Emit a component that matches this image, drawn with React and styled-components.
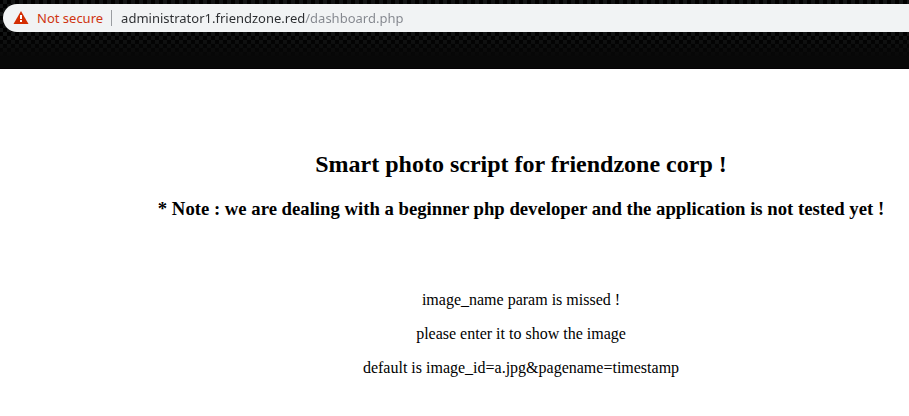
import React from "react";
import styled, { createGlobalStyle } from "styled-components";

const GlobalStyle = createGlobalStyle`
  body {
    margin: 0;
    background: #ffffff;
    color: #000000;
    font-family: "Liberation Serif", "Times New Roman", serif;
    font-size: 16px;
  }
`;

const BrowserBar = styled.header`
  padding: 4px 0 36px 3px;
  background:
    linear-gradient(to bottom, transparent 32px, #080808 58px),
    repeating-conic-gradient(#000000 0 25%, #131515 0 50%) 3px 0 / 8px 8px;
  border-bottom: 1px solid #050204;
`;

const AddressBar = styled.div`
  display: flex;
  align-items: center;
  height: 28px;
  padding-left: 10px;
  border-radius: 14px 0 0 14px;
  background: #f1f3f4;
  font-family: "Noto Sans", sans-serif;
  font-size: 13px;
  line-height: 20px;
`;

const SecurityButton = styled.button`
  display: flex;
  align-items: center;
  gap: 8px;
  padding: 0;
  border: 0;
  background: none;
  color: #cf3510;
  font: inherit;
  white-space: nowrap;
`;

const WarningIcon = styled.svg`
  display: block;
  width: 16px;
  height: 16px;
`;

const Divider = styled.span`
  width: 1px;
  height: 16px;
  margin: 0 9px 0 8px;
  background: #9a9da1;
`;

const UrlInput = styled.input`
  flex: 1;
  min-width: 0;
  padding: 0;
  border: 0;
  outline: 0;
  background: linear-gradient(to right, #2b2d30 ${(p) => p.$hostWidth}px, #83868d ${(p) => p.$hostWidth}px);
  background-clip: text;
  color: transparent;
  caret-color: #2b2d30;
  font: inherit;
`;

const Page = styled.main`
  padding: 81px 0 24px 133px;
  text-align: center;
`;

const Title = styled.h2`
  margin: 0;
  font-size: 24px;
  line-height: 28px;
`;

const Note = styled.h3`
  margin: 21px 0 72px;
  line-height: 20px;
`;

const Message = styled.p`
  margin: 0 0 16px;
  line-height: 18px;
`;

export default function App() {
  return (
    <>
      <GlobalStyle />
      <BrowserBar>
        <AddressBar>
          <SecurityButton type="button">
            <WarningIcon viewBox="0 0 16 16" aria-hidden="true">
              <path d="M8 1 15.5 14H.5Z" fill="#d42d02" />
              <path d="M7 5h2v4H7zM7 10h2v2H7z" fill="#ffffff" />
            </WarningIcon>
            Not secure
          </SecurityButton>
          <Divider />
          <UrlInput
            type="text"
            aria-label="Address"
            spellCheck={false}
            $hostWidth={184}
            defaultValue="administrator1.friendzone.red/dashboard.php"
          />
        </AddressBar>
      </BrowserBar>
      <Page>
        <Title>Smart photo script for friendzone corp !</Title>
        <Note>
          * Note : we are dealing with a beginner php developer and the application is not tested yet !
        </Note>
        <Message>image_name param is missed !</Message>
        <Message>please enter it to show the image</Message>
        <Message>default is image_id=a.jpg&amp;pagename=timestamp</Message>
      </Page>
    </>
  );
}
